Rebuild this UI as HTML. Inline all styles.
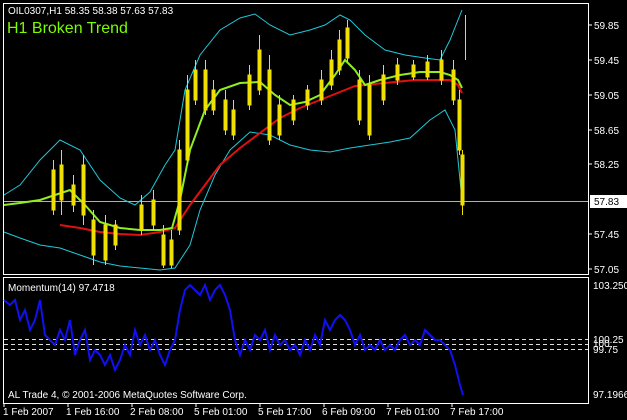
<!DOCTYPE html>
<html><head><style>
body{margin:0;background:#000;width:627px;height:420px;overflow:hidden}
svg{display:block}
text{font-family:"Liberation Sans",sans-serif;font-size:10px;fill:#fff}
</style></head><body>
<svg width="627" height="420" viewBox="0 0 627 420">
<rect width="627" height="420" fill="#000"/>
<rect x="3.5" y="3.5" width="585" height="271" fill="none" stroke="#fff"/>
<rect x="3.5" y="277.5" width="585" height="126" fill="none" stroke="#fff"/>
<line x1="4" y1="201.5" x2="588" y2="201.5" stroke="#9fb6c8"/>
<polyline fill="none" stroke="#20c8d8" points="4,195 20,185 40,160 60,140 80,150 100,180 120,198 135,205 150,192 165,165 175,150 185,90 200,55 220,30 240,18 255,14 270,25 290,35 310,30 325,25 340,15 350,20 365,35 385,50 405,55 425,58 440,60 450,40 458,20 462,10"/>
<polyline fill="none" stroke="#20c8d8" points="4,232 20,238 40,245 60,248 80,255 100,262 120,266 140,268 160,270 175,268 190,245 200,210 215,175 230,150 250,132 270,135 290,145 310,150 330,152 350,148 370,145 390,142 410,138 430,120 445,110 455,130 462,200"/>
<polyline fill="none" stroke="#e01010" stroke-width="2" points="60,225 80,228 100,232 120,234 140,235 160,232 175,228 190,205 205,185 220,165 240,148 260,133 280,118 300,108 320,100 340,92 355,86 375,84 395,82 415,80 435,80 450,80 458,85 462,93"/>
<polyline fill="none" stroke="#90ee20" stroke-width="2" points="4,205 20,203 40,200 55,195 70,190 85,205 100,222 120,228 140,230 160,230 172,228 180,200 190,150 205,110 220,90 240,83 260,82 275,95 290,105 305,102 320,95 335,75 345,60 355,70 365,85 380,80 400,75 420,72 440,72 450,75 458,80 462,88"/>
<g stroke="#f0e000" fill="#f0e000">
<path fill="none" d="M53.5,160V215M61.5,150V215M73.5,175V212M83.5,155V225M93.5,210V265M105.5,215V265M115.5,220V250M141.5,195V235M153.5,190V230M163.5,225V268M171.5,230V268M179.5,140V235M187.5,75V165M195.5,60V105M205.5,60V115M213.5,80V115M225.5,90V135M233.5,100V140M249.5,65V110M259.5,35V95M269.5,55V145M279.5,95V140M293.5,95V125M307.5,85V110M321.5,70V105M331.5,50V90M339.5,30V75M347.5,20V62M359.5,70V125M369.5,75V140M383.5,65V105M397.5,58V85M413.5,60V80M427.5,55V80M441.5,50V85M453.5,60V105M459.5,90V155M462.5,150V215M465.5,15V60"/>
<rect x="52" y="170" width="3" height="40"/><rect x="60" y="165" width="3" height="35"/><rect x="72" y="185" width="3" height="20"/>
<rect x="82" y="165" width="3" height="50"/><rect x="92" y="220" width="3" height="35"/><rect x="104" y="225" width="3" height="35"/>
<rect x="114" y="225" width="3" height="20"/><rect x="140" y="205" width="3" height="25"/><rect x="152" y="200" width="3" height="25"/>
<rect x="162" y="235" width="3" height="30"/><rect x="170" y="240" width="3" height="25"/><rect x="178" y="150" width="3" height="80"/>
<rect x="186" y="90" width="3" height="70"/><rect x="194" y="70" width="3" height="30"/><rect x="204" y="70" width="3" height="40"/>
<rect x="212" y="90" width="3" height="20"/><rect x="224" y="100" width="3" height="30"/><rect x="232" y="110" width="3" height="25"/>
<rect x="248" y="75" width="3" height="30"/><rect x="258" y="50" width="3" height="40"/><rect x="268" y="70" width="3" height="70"/>
<rect x="278" y="105" width="3" height="30"/><rect x="292" y="100" width="3" height="20"/><rect x="306" y="90" width="3" height="15"/>
<rect x="320" y="80" width="3" height="20"/><rect x="330" y="60" width="3" height="25"/><rect x="338" y="40" width="3" height="30"/>
<rect x="346" y="28" width="3" height="30"/><rect x="358" y="80" width="3" height="40"/><rect x="368" y="85" width="3" height="50"/>
<rect x="382" y="75" width="3" height="25"/><rect x="396" y="65" width="3" height="15"/><rect x="412" y="65" width="3" height="12"/>
<rect x="426" y="62" width="3" height="15"/><rect x="440" y="60" width="3" height="20"/><rect x="452" y="70" width="3" height="30"/>
<rect x="458" y="100" width="3" height="50"/><rect x="461" y="155" width="3" height="50"/>
</g>
<text x="8" y="14">OIL0307,H1  58.35 58.38 57.63 57.83</text>
<text x="7" y="33" style="font-size:16px;fill:#7cfc00">H1 Broken Trend</text>
<g stroke="#fff"><line x1="589" y1="25" x2="592" y2="25"/><line x1="589" y1="60" x2="592" y2="60"/><line x1="589" y1="95" x2="592" y2="95"/><line x1="589" y1="130" x2="592" y2="130"/><line x1="589" y1="164" x2="592" y2="164"/><line x1="589" y1="234" x2="592" y2="234"/><line x1="589" y1="269" x2="592" y2="269"/></g>
<text x="594" y="29">59.85</text><text x="594" y="64">59.45</text><text x="594" y="99">59.05</text><text x="594" y="134">58.65</text><text x="594" y="168">58.25</text><text x="594" y="238">57.45</text><text x="594" y="273">57.05</text>
<rect x="590" y="195" width="37" height="13" fill="#fff"/><text x="594" y="205" style="fill:#000">57.83</text>
<g stroke="#ddd" stroke-dasharray="4,3"><line x1="4" y1="339.5" x2="588" y2="339.5"/><line x1="4" y1="344.5" x2="588" y2="344.5"/><line x1="4" y1="349.5" x2="588" y2="349.5"/></g>
<polyline fill="none" stroke="#1010f0" stroke-width="2" points="4,300 10,305 15,300 20,320 25,310 30,330 35,320 40,300 45,335 50,340 55,345 60,330 65,340 70,320 75,355 80,340 85,330 90,360 95,350 100,355 105,365 110,355 115,370 120,360 125,345 130,355 135,330 140,345 145,335 150,350 155,340 160,355 165,365 170,350 175,340 180,310 185,290 190,285 195,290 200,295 205,285 210,300 215,290 220,285 225,295 230,310 235,340 240,355 245,340 250,350 255,335 260,340 265,330 270,350 275,335 280,345 285,340 290,350 295,345 300,355 305,340 310,350 315,335 320,345 325,320 330,330 335,320 340,315 345,320 350,330 355,345 360,335 365,350 370,345 375,350 380,340 385,350 390,345 395,350 400,340 405,335 410,345 415,340 420,345 425,330 430,335 435,340 440,340 445,345 450,350 455,365 460,385 463,395"/>
<text x="8" y="291">Momentum(14) 97.4718</text>
<text x="8" y="398">AL Trade 4, © 2001-2006 MetaQuotes Software Corp.</text>
<text x="593" y="289">103.250</text><text x="593" y="343">100.25</text><text x="593" y="347">100</text><text x="593" y="353">99.75</text><text x="593" y="398">97.1966</text>
<g stroke="#fff"><line x1="4" y1="404" x2="4" y2="407"/><line x1="68" y1="404" x2="68" y2="407"/><line x1="132" y1="404" x2="132" y2="407"/><line x1="196" y1="404" x2="196" y2="407"/><line x1="260" y1="404" x2="260" y2="407"/><line x1="324" y1="404" x2="324" y2="407"/><line x1="388" y1="404" x2="388" y2="407"/><line x1="452" y1="404" x2="452" y2="407"/></g>
<text x="3" y="415">1 Feb 2007</text><text x="66" y="415">1 Feb 16:00</text><text x="130" y="415">2 Feb 08:00</text><text x="194" y="415">5 Feb 01:00</text><text x="258" y="415">5 Feb 17:00</text><text x="322" y="415">6 Feb 09:00</text><text x="386" y="415">7 Feb 01:00</text><text x="450" y="415">7 Feb 17:00</text>
</svg>
</body></html>
